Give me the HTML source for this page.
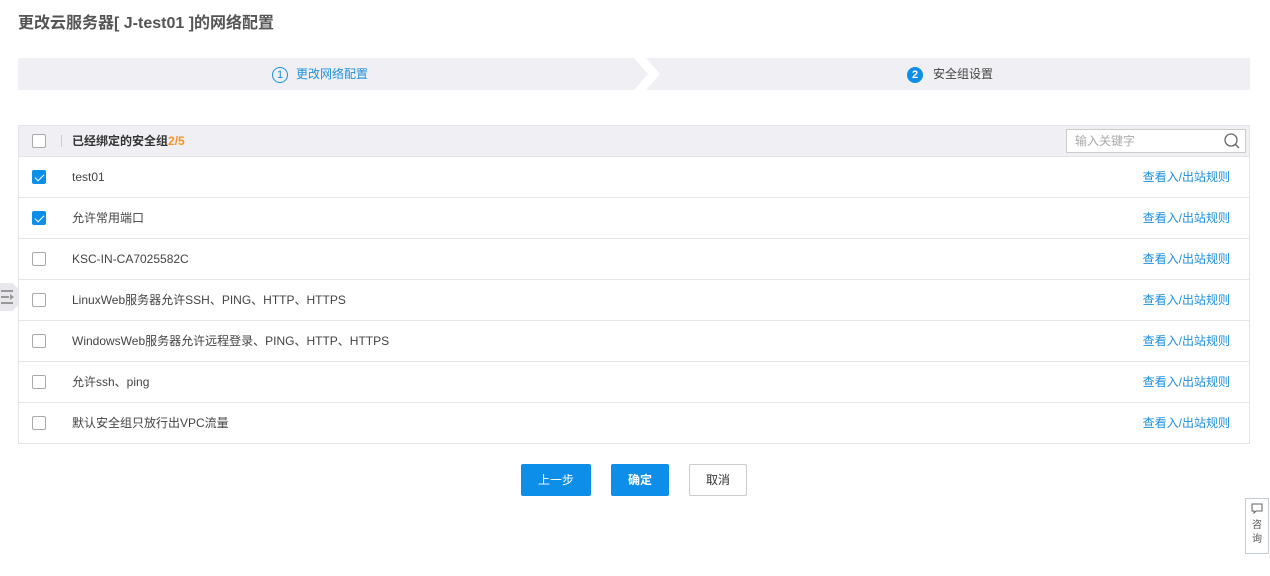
<!DOCTYPE html>
<html><head><meta charset="utf-8"><style>
*{box-sizing:border-box;margin:0;padding:0}
body{width:1270px;height:576px;background:#fff;font-family:"Liberation Sans","Noto Sans CJK SC",sans-serif;font-size:12px;color:#333;position:relative;overflow:hidden}
.title{position:absolute;left:18px;top:13px;font-size:16px;font-weight:bold;color:#555;line-height:22px}
.steps{position:absolute;left:18px;top:58px;width:1232px;height:32px;background:#f0f0f4}
.chev{position:absolute;left:616px;top:0}
.s1{position:absolute;left:254px;top:0;line-height:32px;color:#1d8fe1;font-size:12px}
.s1 .c{display:inline-block;width:16px;height:16px;border:1px solid #1d8fe1;border-radius:50%;text-align:center;line-height:14px;font-size:11px;margin-right:8px;vertical-align:middle}
.s2{position:absolute;left:889px;top:0;line-height:32px;color:#444}
.s2 .c{display:inline-block;width:16px;height:16px;background:#0d8ee8;color:#fff;border-radius:50%;text-align:center;line-height:16px;font-size:11px;font-weight:bold;margin-right:10px;vertical-align:middle}
.tbl{position:absolute;left:18px;top:125px;width:1232px;border:1px solid #e3e3e8}
.hd{height:31px;background:#f0f0f4;border-bottom:1px solid #e3e3e8;position:relative}
.row{height:41px;border-bottom:1px solid #e6e6e6;position:relative}
.row:last-child{border-bottom:none;height:40px}
.cb{position:absolute;left:13px;width:14px;height:14px;border:1px solid #aaa;border-radius:2px;background:#fff}
.hd .cb{top:8px}
.row .cb{top:13px}
.cb.on{background:#0d8ee8;border-color:#0d8ee8}
.cb.on:after{content:"";position:absolute;left:4px;top:1px;width:4px;height:8px;border:solid #fff;border-width:0 1px 1px 0;transform:rotate(45deg)}
.sep{position:absolute;left:42px;top:9px;width:1px;height:12px;background:#ccc}
.hd .t{position:absolute;left:53px;top:0;line-height:30px;font-weight:bold;color:#333}
.hd .t b{color:#f7931e}
.row .t{position:absolute;left:53px;top:0;line-height:40px;color:#444}
.row a{position:absolute;right:19px;top:0;line-height:40px;color:#1d8fe1;text-decoration:none}
.srch{position:absolute;right:3px;top:3px;width:180px;height:24px;background:#fff;border:1px solid #ccc;color:#aaa;padding:0 8px;line-height:22px}
.srch svg{position:absolute;right:4px;top:2px}
.btn{position:absolute;top:464px;height:32px;width:70px;line-height:30px;text-align:center;border-radius:2px;font-size:12px}
.b1{left:521px;background:#0d8ee8;color:#fff;border:1px solid #0d8ee8}
.b2{left:611px;width:58px;background:#0d8ee8;color:#fff;border:1px solid #0d8ee8;font-weight:bold}
.b3{left:689px;width:58px;background:#fff;color:#333;border:1px solid #ccc}
.side{position:absolute;left:1245px;top:498px;width:24px;height:56px;border:1px solid #c5ccd3;background:#fff;text-align:center;font-size:10px;color:#555;line-height:14px;padding-top:4px}
.tab{position:absolute;left:0;top:283px;width:18px;height:28px;background:#e8e8ec;clip-path:polygon(0 0,70% 0,100% 20%,100% 80%,70% 100%,0 100%)}
</style></head><body>
<div class="title">更改云服务器[ J-test01 ]的网络配置</div>
<div class="steps">
<svg class="chev" width="30" height="32"><polygon points="0,0 12,0 26,16 12,32 0,32 14,16" fill="#fff"/></svg>
<div class="s1"><span class="c">1</span>更改网络配置</div>
<div class="s2"><span class="c">2</span>安全组设置</div>
</div>
<div class="tab"><svg width="18" height="28"><g stroke="#999" stroke-width="2"><line x1="1" y1="8" x2="13" y2="8"/><line x1="1" y1="14" x2="9" y2="14"/><line x1="1" y1="20" x2="13" y2="20"/></g><polygon points="10,11 14,14 10,17" fill="#999"/></svg></div>
<div class="tbl">
<div class="hd"><span class="cb"></span><span class="sep"></span><span class="t">已经绑定的安全组<b>2/5</b></span>
<div class="srch">输入关键字<svg width="18" height="18"><circle cx="8" cy="8" r="6" fill="none" stroke="#666" stroke-width="1.3"/><line x1="12.5" y1="12.5" x2="16" y2="16" stroke="#666" stroke-width="1.3"/></svg></div></div>
<div class="row"><span class="cb on"></span><span class="t">test01</span><a>查看入/出站规则</a></div>
<div class="row"><span class="cb on"></span><span class="t">允许常用端口</span><a>查看入/出站规则</a></div>
<div class="row"><span class="cb"></span><span class="t">KSC-IN-CA7025582C</span><a>查看入/出站规则</a></div>
<div class="row"><span class="cb"></span><span class="t">LinuxWeb服务器允许SSH、PING、HTTP、HTTPS</span><a>查看入/出站规则</a></div>
<div class="row"><span class="cb"></span><span class="t">WindowsWeb服务器允许远程登录、PING、HTTP、HTTPS</span><a>查看入/出站规则</a></div>
<div class="row"><span class="cb"></span><span class="t">允许ssh、ping</span><a>查看入/出站规则</a></div>
<div class="row"><span class="cb"></span><span class="t">默认安全组只放行出VPC流量</span><a>查看入/出站规则</a></div>
</div>
<div class="btn b1">上一步</div>
<div class="btn b2">确定</div>
<div class="btn b3">取消</div>
<div class="side"><svg width="12" height="11"><path d="M1 1h10v7H5l-2 2V8H1z" fill="none" stroke="#666"/></svg><br>咨<br>询</div>
</body></html>
